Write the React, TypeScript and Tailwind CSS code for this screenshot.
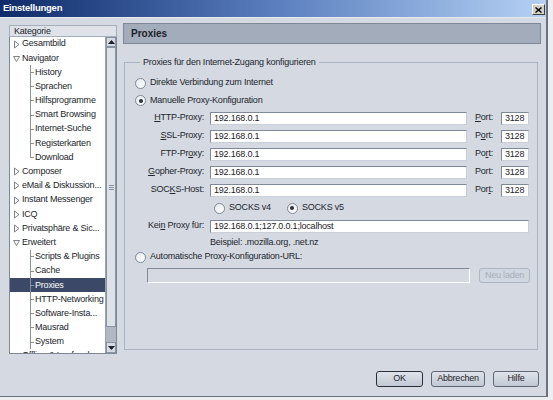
import React from "react";

type TreeItem = {
  label: string;
  kind: "closed" | "open" | "child";
  last?: boolean;
  selected?: boolean;
};

const tree: TreeItem[] = [
  { label: "Gesamtbild", kind: "closed" },
  { label: "Navigator", kind: "open" },
  { label: "History", kind: "child" },
  { label: "Sprachen", kind: "child" },
  { label: "Hilfsprogramme", kind: "child" },
  { label: "Smart Browsing", kind: "child" },
  { label: "Internet-Suche", kind: "child" },
  { label: "Registerkarten", kind: "child" },
  { label: "Download", kind: "child", last: true },
  { label: "Composer", kind: "closed" },
  { label: "eMail & Diskussion...", kind: "closed" },
  { label: "Instant Messenger", kind: "closed" },
  { label: "ICQ", kind: "closed" },
  { label: "Privatsphäre & Sic...", kind: "closed" },
  { label: "Erweitert", kind: "open" },
  { label: "Scripts & Plugins", kind: "child" },
  { label: "Cache", kind: "child" },
  { label: "Proxies", kind: "child", selected: true },
  { label: "HTTP-Networking", kind: "child" },
  { label: "Software-Insta...", kind: "child" },
  { label: "Mausrad", kind: "child" },
  { label: "System", kind: "child" },
  { label: "Offline & Laufwerk", kind: "open" },
];

const proxies = [
  { pre: "", key: "H", post: "TTP-Proxy:", port: ["", "P", "ort:"] },
  { pre: "", key: "S", post: "SL-Proxy:", port: ["P", "o", "rt:"] },
  { pre: "FTP-Pr", key: "o", post: "xy:", port: ["Po", "r", "t:"] },
  { pre: "", key: "G", post: "opher-Proxy:", port: ["Port:", "", ""] },
  { pre: "SOC", key: "K", post: "S-Host:", port: ["Por", "t", ":"] },
];

function Arrow({ open }: { open: boolean }) {
  return (
    <svg width="7" height="9" viewBox="0 0 7 9" className="shrink-0">
      {open ? (
        <path d="M0.5 2.5 L6.5 2.5 L3.5 7.5 Z" fill="none" stroke="#6f7684" strokeWidth="0.9" />
      ) : (
        <path d="M1.5 1 L6 4.5 L1.5 8 Z" fill="none" stroke="#6f7684" strokeWidth="0.9" />
      )}
    </svg>
  );
}

function Radio({ checked }: { checked?: boolean }) {
  return (
    <span className="w-[11px] h-[11px] rounded-full border border-[#7d8898] bg-gradient-to-br from-[#e6e9ee] to-white flex items-center justify-center shrink-0">
      {checked && <span className="w-[4px] h-[4px] rounded-full bg-[#2b303a]" />}
    </span>
  );
}

function Field({ value, className = "" }: { value: string; className?: string }) {
  return (
    <div
      className={`h-[13px] bg-white border border-t-[#7f8999] border-l-[#7f8999] border-r-[#c9cfd8] border-b-[#c9cfd8] text-[9px] leading-[11px] pl-[3px] text-[#1e2229] overflow-hidden whitespace-nowrap ${className}`}
    >
      {value}
    </div>
  );
}

function TreeRow({ item }: { item: TreeItem }) {
  const sel = item.selected;
  return (
    <div
      className={`h-[14.2px] flex items-center whitespace-nowrap ${sel ? "bg-[#3c4867] text-white" : "text-[#23262c]"}`}
    >
      {item.kind === "child" ? (
        <>
          <span className="w-[20px] shrink-0" />
          <span className={`w-px bg-[#8b919c] shrink-0 ${item.last ? "h-1/2 self-start" : "self-stretch"}`} />
          <span className="w-[3px] h-px bg-[#8b919c] shrink-0" />
          <span className="pl-px">{item.label}</span>
        </>
      ) : (
        <>
          <span className="w-[3px] shrink-0" />
          <Arrow open={item.kind === "open"} />
          <span className="pl-[2px]">{item.label}</span>
        </>
      )}
    </div>
  );
}

function Scrollbar() {
  return (
    <div className="w-[11px] shrink-0 flex flex-col border-l border-[#9aa3b1] bg-[#c3c9d3]">
      <div className="h-[10px] bg-[#d6dbe3] border border-[#8a93a2] flex items-center justify-center">
        <svg width="7" height="4" viewBox="0 0 7 4">
          <path d="M0 4 L3.5 0 L7 4 Z" fill="#1c1f26" />
        </svg>
      </div>
      <div className="h-[280px] bg-[#dde1e8] border border-[#8a93a2] flex flex-col items-center justify-center gap-px">
        <span className="w-[5px] h-px bg-[#8a93a2]" />
        <span className="w-[5px] h-px bg-[#8a93a2]" />
        <span className="w-[5px] h-px bg-[#8a93a2]" />
      </div>
      <div className="flex-1 bg-[#b1b8c4]" />
      <div className="h-[11px] bg-[#d6dbe3] border border-[#8a93a2] flex items-center justify-center">
        <svg width="7" height="4" viewBox="0 0 7 4">
          <path d="M0 0 L3.5 4 L7 0 Z" fill="#1c1f26" />
        </svg>
      </div>
    </div>
  );
}

function Button({ label, primary }: { label: string; primary?: boolean }) {
  return (
    <div
      className={`h-[16px] rounded-[3px] flex items-center justify-center text-[9px] text-[#1f232a] bg-gradient-to-b from-[#dfe3ea] to-[#c2c9d4] ${
        primary ? "border-[1.5px] border-[#2a2e36]" : "border border-[#5e6674]"
      }`}
    >
      {label}
    </div>
  );
}

export default function App() {
  return (
    <div className="w-[553px] h-[400px] bg-[#eceef1] overflow-hidden font-['Liberation_Sans',Arial,sans-serif] tracking-[-0.2px]">
      <div className="w-[548px] h-[397px] flex flex-col bg-[#d4d9e2] border-r-2 border-b border-[#6a717d]">
        {/* Title bar */}
        <div className="h-[18px] shrink-0 flex items-center justify-between pl-[3px] pr-[1px] bg-gradient-to-r from-[#0f2b69] via-[#5a7ebe] to-[#b5d1f3] border-b border-[#e6ebf2]">
          <span className="text-white font-bold text-[9.5px] tracking-tight">Einstellungen</span>
          <div className="w-[13px] h-[11px] mt-[2px] bg-[#d4d0c8] border border-t-white border-l-white border-r-[#404040] border-b-[#404040] flex items-center justify-center">
            <svg width="7" height="6" viewBox="0 0 7 6">
              <path d="M0.5 0.5 L6.5 5.5 M6.5 0.5 L0.5 5.5" stroke="#000" strokeWidth="1.4" />
            </svg>
          </div>
        </div>

        {/* Body */}
        <div className="flex-1 flex flex-col pl-[9px] pr-[5px] pt-[5px]">
          <div className="h-[331px] flex">
            {/* Left: categories */}
            <div className="w-[108px] flex flex-col pt-[2px]">
              <div className="h-[12px] border border-[#a6aebb] bg-[#dfe3e9] text-[9px] leading-[10px] text-[#23262c] pl-[4px]">
                Kategorie
              </div>
              <div className="flex-1 flex border border-t-0 border-[#7f8898] bg-white overflow-hidden">
                <div className="flex-1 text-[9px] overflow-hidden">
                  {tree.map((item) => (
                    <TreeRow key={item.label} item={item} />
                  ))}
                </div>
                <Scrollbar />
              </div>
            </div>

            {/* Splitter */}
            <div className="w-[6px]" />

            {/* Right: panel */}
            <div className="flex-1 flex flex-col">
              <div className="h-[21px] bg-[#a2acba] border border-[#7e8899] flex items-center pl-[7px] text-[10px] font-bold text-[#1c2029] tracking-normal">
                Proxies
              </div>

              <fieldset className="mt-[13px] ml-[1px] mr-[3px] h-[293px] border border-[#aab3c1] pl-[10px] pr-[6px] text-[9px] text-[#23262c]">
                <legend className="ml-[5px] px-[3px] leading-[11px]">
                  Proxies für den Internet-Zugang konfigurieren
                </legend>

                <div className="mt-[6px] h-[18px] flex items-center gap-[4px]">
                  <Radio />
                  <span>Direkte Verbindung zum Internet</span>
                </div>
                <div className="h-[17px] flex items-center gap-[4px]">
                  <Radio checked />
                  <span>Manuelle Proxy-Konfiguration</span>
                </div>

                {proxies.map((p) => (
                  <div key={p.post} className="h-[18px] flex items-center">
                    <span className="w-[69px] shrink-0 text-right whitespace-nowrap">
                      {p.pre}
                      <span className="underline">{p.key}</span>
                      {p.post}
                    </span>
                    <Field value="192.168.0.1" className="ml-[6px] w-[257px]" />
                    <span className="ml-[8px] w-[26px] shrink-0">
                      {p.port[0]}
                      <span className="underline">{p.port[1]}</span>
                      {p.port[2]}
                    </span>
                    <Field value="3128" className="w-[28px]" />
                  </div>
                ))}

                <div className="h-[18px] flex items-center pl-[79px]">
                  <Radio />
                  <span className="ml-[4px]">SOCKS v4</span>
                  <span className="ml-[16px]">
                    <Radio checked />
                  </span>
                  <span className="ml-[4px]">SOCKS v5</span>
                </div>

                <div className="h-[18px] flex items-center">
                  <span className="w-[69px] shrink-0 text-right whitespace-nowrap">
                    Kei<span className="underline">n</span> Proxy für:
                  </span>
                  <Field value="192.168.0.1;127.0.0.1;localhost" className="ml-[6px] w-[319px]" />
                </div>

                <div className="h-[16px] flex items-center pl-[75px]">Beispiel: .mozilla.org, .net.nz</div>

                <div className="h-[12px] flex items-center gap-[4px]">
                  <Radio />
                  <span>Automatische Proxy-Konfiguration-URL:</span>
                </div>

                <div className="mt-[5px] flex items-center pl-[12px]">
                  <div className="w-[323px] h-[15px] bg-[#d4d9e2] border border-t-[#7f8999] border-l-[#7f8999] border-r-white border-b-white" />
                  <div className="ml-[9px] w-[51px] h-[15px] rounded-[3px] border border-[#aeb6c2] bg-[#d1d7e0] text-[#a7afbb] flex items-center justify-center">
                    Neu laden
                  </div>
                </div>
              </fieldset>
            </div>
          </div>

          {/* Footer buttons */}
          <div className="mt-[17px] flex justify-end gap-[8px] pr-[2px]">
            <div className="w-[47px]">
              <Button label="OK" primary />
            </div>
            <div className="w-[54px]">
              <Button label="Abbrechen" />
            </div>
            <div className="w-[46px]">
              <Button label="Hilfe" />
            </div>
          </div>
        </div>
      </div>
    </div>
  );
}
